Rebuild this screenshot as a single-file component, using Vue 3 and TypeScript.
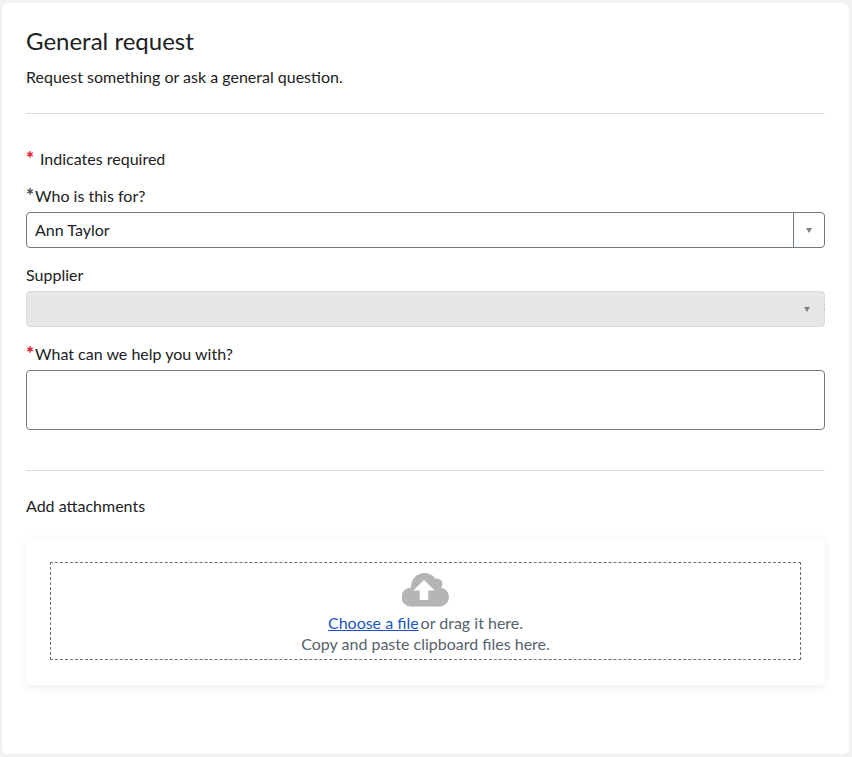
<script setup lang="ts">
const title = 'General request'
</script>

<template>
  <div class="page">
    <main class="card">
      <h1 class="title">{{ title }}</h1>
      <p class="subtitle">Request something or ask a general ques<span class="lig">ti</span>on.</p>
      <hr class="rule first" />
      <div class="legend"><span class="star red">*</span><span class="legend-text">Indicates required</span></div>

      <label class="label who"><span class="star dark">*</span>Who is this for?</label>
      <div class="select">
        <span class="value">Ann Taylor</span>
        <span class="arrow-box"><i class="caret"></i></span>
      </div>

      <label class="label supplier">Supplier</label>
      <div class="select disabled">
        <span class="value"></span>
        <span class="arrow-box"><i class="caret"></i></span>
        <i class="notch"></i>
      </div>

      <label class="label help"><span class="star red">*</span>What can we help you with?</label>
      <div class="textarea"></div>

      <hr class="rule second" />
      <div class="attach-label">Add attachments</div>

      <section class="attach-card">
        <div class="drop">
          <svg class="cloud" width="48" height="36" viewBox="0 0 48 36" aria-hidden="true">
            <g fill="#b5b5b5">
              <circle cx="22.500" cy="13.500" r="13.500" />
              <circle cx="35" cy="11" r="5.500" />
              <circle cx="9" cy="24" r="9.500" />
              <circle cx="37.500" cy="24" r="9.500" />
              <rect x="9" y="14" width="28.500" height="19.500" />
            </g>
            <path fill="#fff" d="M22 7 32.700 17.500H26.200V27H17.700V17.500H11.300Z" />
          </svg>
          <div class="drop-line first-line"><a class="link">Choose a file</a><span class="or">or drag it here.</span></div>
          <div class="drop-line">Copy and paste clipboard files here.</div>
        </div>
      </section>
    </main>
  </div>
</template>

<style>
html, body { margin: 0; background: #f1f2f3; }
</style>

<style scoped>
.page {
  width: 852px;
  height: 757px;
  padding: 3px 3px 3px 2px;
  box-sizing: border-box;
  font-family: Lato, "Liberation Sans", sans-serif;
  color: #202122;
  overflow: hidden;
  text-rendering: optimizeLegibility;
}
.lig { font-feature-settings: "dlig" 1; }
.card {
  box-sizing: border-box;
  height: 751px;
  background: #fff;
  border-radius: 6px;
  padding: 23px 24px 0;
}
.title {
  margin: 0;
  font-size: 24px;
  line-height: 30px;
  font-weight: 400;
}
.subtitle {
  margin: 11px 0 0;
  font-size: 16px;
  line-height: 20px;
}
.rule {
  margin: 0;
  border: 0;
  height: 1px;
  background: #dcdee0;
}
.first { margin-top: 26px; }
.legend {
  margin-top: 35px;
  height: 20px;
  display: flex;
  font-size: 16px;
  line-height: 20px;
}
.legend-text { margin-left: 5px; }
.star {
  font-size: 19px;
  font-weight: 900;
  line-height: 18px;
  width: 9px;
  display: inline-block;
  vertical-align: top;
}
.red { color: #e01b36; }
.dark { color: #4f5357; }
.label {
  display: block;
  height: 20px;
  font-size: 16px;
  line-height: 20px;
}
.who { margin-top: 17px; }
.supplier { margin-top: 17px; }
.help { margin-top: 17px; }
.select {
  position: relative;
  box-sizing: border-box;
  margin-top: 6px;
  height: 36px;
  border: 1px solid #6e7a82;
  border-radius: 4px;
  display: flex;
  align-items: stretch;
  font-size: 16px;
}
.value {
  flex: 1;
  padding-left: 8px;
  line-height: 34px;
}
.arrow-box {
  width: 30px;
  border-left: 1px solid #6e7a82;
  display: flex;
  align-items: center;
  justify-content: center;
}
.caret {
  width: 0;
  height: 0;
  border-left: 3px solid transparent;
  border-right: 3px solid transparent;
  border-top: 5px solid #808080;
}
.disabled {
  background: #e6e7e9;
  border-color: #d8dadc;
}
.disabled .arrow-box {
  border-left: 0;
  padding-right: 2px;
}
.notch {
  position: absolute;
  right: -1px;
  top: 17px;
  width: 1px;
  height: 1px;
  background: #a8acb0;
}
.textarea {
  box-sizing: border-box;
  margin-top: 6px;
  height: 60px;
  border: 1px solid #6e7a82;
  border-radius: 4px;
}
.second { margin-top: 40px; }
.attach-label {
  margin-top: 25px;
  font-size: 16px;
  line-height: 20px;
}
.attach-card {
  margin-top: 22px;
  box-sizing: border-box;
  height: 147px;
  padding: 24px;
  background: #fff;
  border-radius: 6px;
  box-shadow: 0 2px 10px rgba(0, 0, 0, 0.07);
}
.drop {
  box-sizing: border-box;
  height: 98px;
  border: 1px dashed #6b6f73;
  display: flex;
  flex-direction: column;
  align-items: center;
  color: #56626c;
  font-size: 16px;
  line-height: 21px;
}
.cloud { margin-top: 10px; display: block; }
.drop-line { white-space: nowrap; }
.first-line { margin-top: 3px; }
.link {
  color: #1a56c4;
  text-decoration: underline;
}
.or { margin-left: 2px; }
</style>
